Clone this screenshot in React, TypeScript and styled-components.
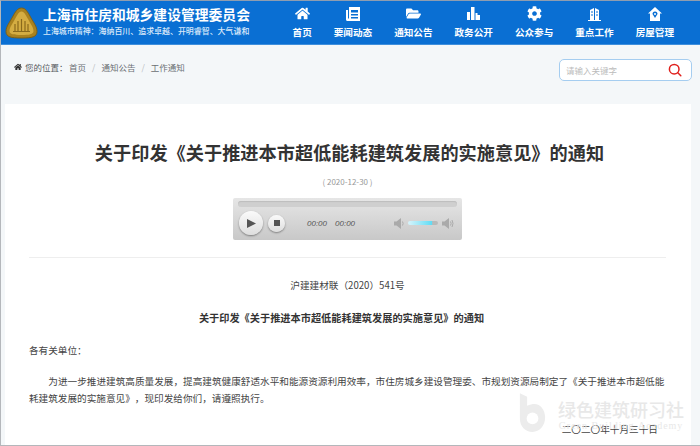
import React from 'react'
import styled, { createGlobalStyle } from 'styled-components'
import { FaHome, FaFolderOpen, FaCog } from 'react-icons/fa'

const GlobalStyle = createGlobalStyle`
  html, body {
    margin: 0;
    padding: 0;
    background: #f4f7f9;
    font-family: "Noto Sans CJK SC", "Liberation Sans", sans-serif;
    text-spacing-trim: space-all;
    font-kerning: none;
  }
`

const Frame = styled.div`
  box-sizing: border-box;
  position: relative;
  width: 700px;
  height: 446px;
  overflow: hidden;
  background: #f4f7f9;
  border-top: 1px solid #8f9db0;
  border-left: 1px solid #b4b7bb;
  border-bottom: 1px solid #b4b7bb;
`

const Header = styled.header`
  display: flex;
  align-items: center;
  justify-content: space-between;
  height: 43px;
  padding: 0 15px 0 4px;
  background: #0a6fd3;
  border-bottom: 1px solid #3f8fdc;
  color: #fff;
`

const Brand = styled.div`
  display: flex;
  align-items: center;
  gap: 5px;
`

const BrandText = styled.div`
  display: flex;
  flex-direction: column;
  gap: 3px;
  padding-bottom: 4px;
  white-space: nowrap;
`

const BrandTitle = styled.div`
  font-size: 13.8px;
  line-height: 18px;
  font-weight: 700;
`

const BrandMotto = styled.div`
  font-size: 7.95px;
  line-height: 10px;
  font-weight: 500;
  color: #d9e9fa;
`

const Nav = styled.nav`
  display: flex;
`

const NavItem = styled.a`
  display: flex;
  flex-direction: column;
  align-items: center;
  gap: 5px;
  padding: 0 11px;
  font-size: 9.6px;
  line-height: 13px;
  font-weight: 700;
  white-space: nowrap;
  color: #fff;
`

const NavIcon = styled.span`
  display: flex;
  align-items: center;
  justify-content: center;
  height: 14px;
  font-size: 15px;
`

const CrumbBar = styled.div`
  display: flex;
  align-items: center;
  justify-content: space-between;
  height: 59px;
  padding: 0 8px 10px 13px;
  box-sizing: border-box;
`

const Crumbs = styled.div`
  display: flex;
  align-items: center;
  padding-bottom: 5px;
  font-size: 8.5px;
  color: #6b6f74;
  white-space: nowrap;
`

const CrumbLabel = styled.span`
  margin: 0 1.500px 0 3px;
  color: #55595e;
`

const CrumbSep = styled.span`
  margin: 0 6px;
  color: #b9bdc2;
`

const Search = styled.div`
  display: flex;
  align-items: center;
  justify-content: space-between;
  box-sizing: border-box;
  width: 133px;
  height: 22px;
  padding: 0 9px 0 6px;
  background: #fff;
  border: 1px solid #a5cdf0;
  border-radius: 5px;
  font-size: 8.5px;
  color: #bcbcbc;
`

const Card = styled.main`
  box-sizing: border-box;
  height: 360px;
  margin: 0 9px 0 4px;
  padding: 36px 25px 0 24px;
  background: #fff;
`

const Title = styled.h1`
  margin: 0 -4px 0 0;
  font-size: 18.2px;
  line-height: 24px;
  font-weight: 700;
  text-align: center;
  white-space: nowrap;
  color: #333;
`

const DateLine = styled.div`
  margin-top: 12px;
  font-size: 8px;
  line-height: 12px;
  text-align: center;
  color: #999;
`

const Player = styled.div`
  box-sizing: border-box;
  display: flex;
  flex-direction: column;
  gap: 4px;
  width: 229px;
  height: 42px;
  margin: 10px auto 0;
  padding: 3px 5px 0;
  background: linear-gradient(#e6e6e6, #c8c8c8);
  border-radius: 2px;
`

const Progress = styled.div`
  height: 6px;
  background: #cfcfcf;
  border-radius: 3px;
  box-shadow: inset 0 1px 1px #bdbdbd;
`

const Controls = styled.div`
  display: flex;
  align-items: center;
  gap: 5px;
  padding-left: 1px;
`

const RoundButton = styled.div<{ $size: number }>`
  display: flex;
  align-items: center;
  justify-content: center;
  width: ${({ $size }) => $size}px;
  height: ${({ $size }) => $size}px;
  flex: none;
  border-radius: 50%;
  background: linear-gradient(#fafafa, #dedede);
  box-shadow: 0 1px 2px rgba(0, 0, 0, 0.4);
`

const Times = styled.div`
  display: flex;
  gap: 8px;
  margin-left: 17px;
  font-size: 8px;
  font-style: italic;
  color: #555;
  font-family: "Liberation Sans", sans-serif;
`

const Volume = styled.div`
  display: flex;
  align-items: center;
  gap: 4px;
  margin-left: 34px;
`

const VolumeTrack = styled.div`
  width: 30px;
  height: 4px;
  border-radius: 2px;
  background: linear-gradient(90deg, #d8f4fb, #5fdcf5 80%, #b9b9b9 82%);
`

const Divider = styled.hr`
  height: 1px;
  margin: 17px 0 0;
  border: 0;
  background: #eeeeee;
`

const Body = styled.div`
  font-size: 9.640px;
  line-height: 16px;
  color: #444;
`

const DocNumber = styled.p`
  margin: 19px 0 0;
  text-align: center;
`

const DocTitle = styled.p`
  margin: 17px 12px 0 0;
  font-size: 10.200px;
  text-align: center;
  font-weight: 700;
  color: #333;
`

const Salutation = styled.p`
  margin: 16px 0 0;
`

const Paragraph = styled.p`
  margin: 15px 0 0;
  line-height: 16.500px;
  text-indent: 2em;
`

const SignOff = styled.p`
  margin: 15px 8px 0 0;
  text-align: right;
`

const Watermark = styled.div`
  position: absolute;
  left: 518px;
  top: 391px;
  display: flex;
  gap: 12px;
  pointer-events: none;
`

const WatermarkText = styled.div`
  display: flex;
  flex-direction: column;
  align-items: center;
  padding-top: 6px;
  color: #e8e8e8;
  font-family: "Liberation Serif", serif;
`

const WatermarkName = styled.div`
  font-size: 18px;
  line-height: 22px;
  font-weight: 500;
  white-space: nowrap;
  font-family: "Noto Sans CJK SC", serif;
`

const WatermarkSub = styled.div`
  font-size: 10px;
  line-height: 11px;
  letter-spacing: 1px;
  white-space: nowrap;
`

const Emblem = () => (
  <svg width="33" height="32" viewBox="0 0 33 32">
    <path d="M16.500 1C20.500 1 22.500 4.500 25.500 10C28.500 15.500 32 19.500 32 24.500C32 30 27 31 16.500 31C6 31 1 30 1 24.500C1 19.500 4.500 15.500 7.500 10C10.500 4.500 12.500 1 16.500 1Z" fill="#a9821f" stroke="#7d6016" />
    <path d="M16.500 4.500C19 4.500 20.500 7.500 23 12C25.500 17 28.500 20 28.500 24C28.500 27.500 24 28 16.500 28C9 28 4.500 27.500 4.500 24C4.500 20 7.500 17 10 12C12.500 7.500 14 4.500 16.500 4.500Z" fill="#d4ad42" />
    <path d="M10 24V17M13 24V14M16.500 24V12M20 24V14M23 24V17M8 24.500H25" stroke="#8a6a1c" strokeWidth="1.200" fill="none" />
  </svg>
)

const PaperIcon = () => (
  <svg width="14" height="14" viewBox="0 0 14 14" fill="#fff">
    <path d="M3 0H14V14H1.500C0.500 14 0 13.300 0 12.500V3H2V11.500H3ZM5 3V5.500H12V3ZM5 7V8.500H12V7ZM5 10V11.500H12V10Z" fillRule="evenodd" />
  </svg>
)

const BarsIcon = () => (
  <svg width="13" height="13" viewBox="0 0 13 13" fill="#fff">
    <rect x="0" y="5" width="3" height="8" />
    <rect x="4" y="0" width="3.500" height="13" />
    <path d="M8.500 13V6H10.500V8H13V13Z" />
  </svg>
)

const BuildingIcon = () => (
  <svg width="13" height="14" viewBox="0 0 13 14" fill="#fff">
    <path d="M2 13V3L6 1V13ZM7 1L11 3V13H7Z" />
    <path d="M0 13H13V14H0Z" />
    <path d="M3 5H5M3 8H5M8 5H10M8 8H10" stroke="#0a6fd3" strokeWidth="1" />
  </svg>
)

const HouseIcon = () => (
  <svg width="14" height="14" viewBox="0 0 14 14">
    <path d="M7 0L14 6.500H12V14H2V6.500H0Z" fill="#fff" />
    <path d="M7 4.500A2.500 2.500 0 0 1 9.500 7L7 11L4.500 7A2.500 2.500 0 0 1 7 4.500Z" fill="#0a6fd3" />
    <circle cx="7" cy="7" r="1" fill="#fff" />
  </svg>
)

const SearchIcon = () => (
  <svg width="14" height="14" viewBox="0 0 14 14" fill="none" stroke="#e0201c" strokeWidth="1.500" strokeLinecap="round">
    <circle cx="6.200" cy="6.200" r="4.800" />
    <path d="M9.800 9.800L12.800 12.800" />
  </svg>
)

const SpeakerIcon = ({ waves }: { waves?: boolean }) => (
  <svg width={waves ? 12 : 10} height="11" viewBox={waves ? '0 0 12 11' : '0 0 10 11'} fill="#aaaaaa">
    <path d="M0 3.500H2.500L7 0V11L2.500 7.500H0Z" />
    <path d="M8.500 3.500Q9.800 5.500 8.500 7.500" stroke="#aaaaaa" fill="none" />
    {waves && <path d="M10 2Q12 5.500 10 9" stroke="#aaaaaa" fill="none" />}
  </svg>
)

const WatermarkLogo = () => (
  <svg width="27" height="42" viewBox="0 0 30 46">
    <path d="M1 1L9 5V15C12 13.500 15 13 17 13C24 13 29 20 29 28C29 37 23 44 15 44C7 44 1 38 1 29Z" fill="#ececec" />
    <circle cx="15" cy="29" r="6.500" fill="#fff" />
  </svg>
)

const navItems: { label: string; icon: React.ReactNode }[] = [
  { label: '首页', icon: <FaHome /> },
  { label: '要闻动态', icon: <PaperIcon /> },
  { label: '通知公告', icon: <FaFolderOpen /> },
  { label: '政务公开', icon: <BarsIcon /> },
  { label: '公众参与', icon: <FaCog /> },
  { label: '重点工作', icon: <BuildingIcon /> },
  { label: '房屋管理', icon: <HouseIcon /> },
]

const App: React.FC = () => {
  return (
    <>
      <GlobalStyle />
      <Frame>
        <Header>
          <Brand>
            <Emblem />
            <BrandText>
              <BrandTitle>上海市住房和城乡建设管理委员会</BrandTitle>
              <BrandMotto>上海城市精神：海纳百川、追求卓越、开明睿智、大气谦和</BrandMotto>
            </BrandText>
          </Brand>
          <Nav>
            {navItems.map((item) => (
              <NavItem key={item.label}>
                <NavIcon>{item.icon}</NavIcon>
                {item.label}
              </NavItem>
            ))}
          </Nav>
        </Header>
        <CrumbBar>
          <Crumbs>
            <FaHome size={8} color="#333" />
            <CrumbLabel>您的位置：</CrumbLabel>
            首页
            <CrumbSep>/</CrumbSep>
            通知公告
            <CrumbSep>/</CrumbSep>
            工作通知
          </Crumbs>
          <Search>
            请输入关键字
            <SearchIcon />
          </Search>
        </CrumbBar>
        <Card>
          <Title>关于印发《关于推进本市超低能耗建筑发展的实施意见》的通知</Title>
          <DateLine>( 2020-12-30 )</DateLine>
          <Player>
            <Progress />
            <Controls>
              <RoundButton $size={24}>
                <svg width="9" height="9" viewBox="0 0 9 9"><path d="M0 0L9 4.500L0 9Z" fill="#555" /></svg>
              </RoundButton>
              <RoundButton $size={17}>
                <svg width="6" height="6" viewBox="0 0 6 6"><rect width="6" height="6" fill="#555" /></svg>
              </RoundButton>
              <Times>
                <span>00:00</span>
                <span>00:00</span>
              </Times>
              <Volume>
                <SpeakerIcon />
                <VolumeTrack />
                <SpeakerIcon waves />
              </Volume>
            </Controls>
          </Player>
          <Divider />
          <Body>
            <DocNumber>沪建建材联（2020）541号</DocNumber>
            <DocTitle>关于印发《关于推进本市超低能耗建筑发展的实施意见》的通知</DocTitle>
            <Salutation>各有关单位：</Salutation>
            <Paragraph>
              为进一步推进建筑高质量发展，提高建筑健康舒适水平和能源资源利用效率，市住房城乡建设管理委、市规划资源局制定了《关于推进本市超低能耗建筑发展的实施意见》，现印发给你们，请遵照执行。
            </Paragraph>
            <SignOff>二〇二〇年十月三十日</SignOff>
          </Body>
        </Card>
        <Watermark>
          <WatermarkLogo />
          <WatermarkText>
            <WatermarkName>绿色建筑研习社</WatermarkName>
            <WatermarkSub>Green Building Academy</WatermarkSub>
          </WatermarkText>
        </Watermark>
      </Frame>
    </>
  )
}

export default App
